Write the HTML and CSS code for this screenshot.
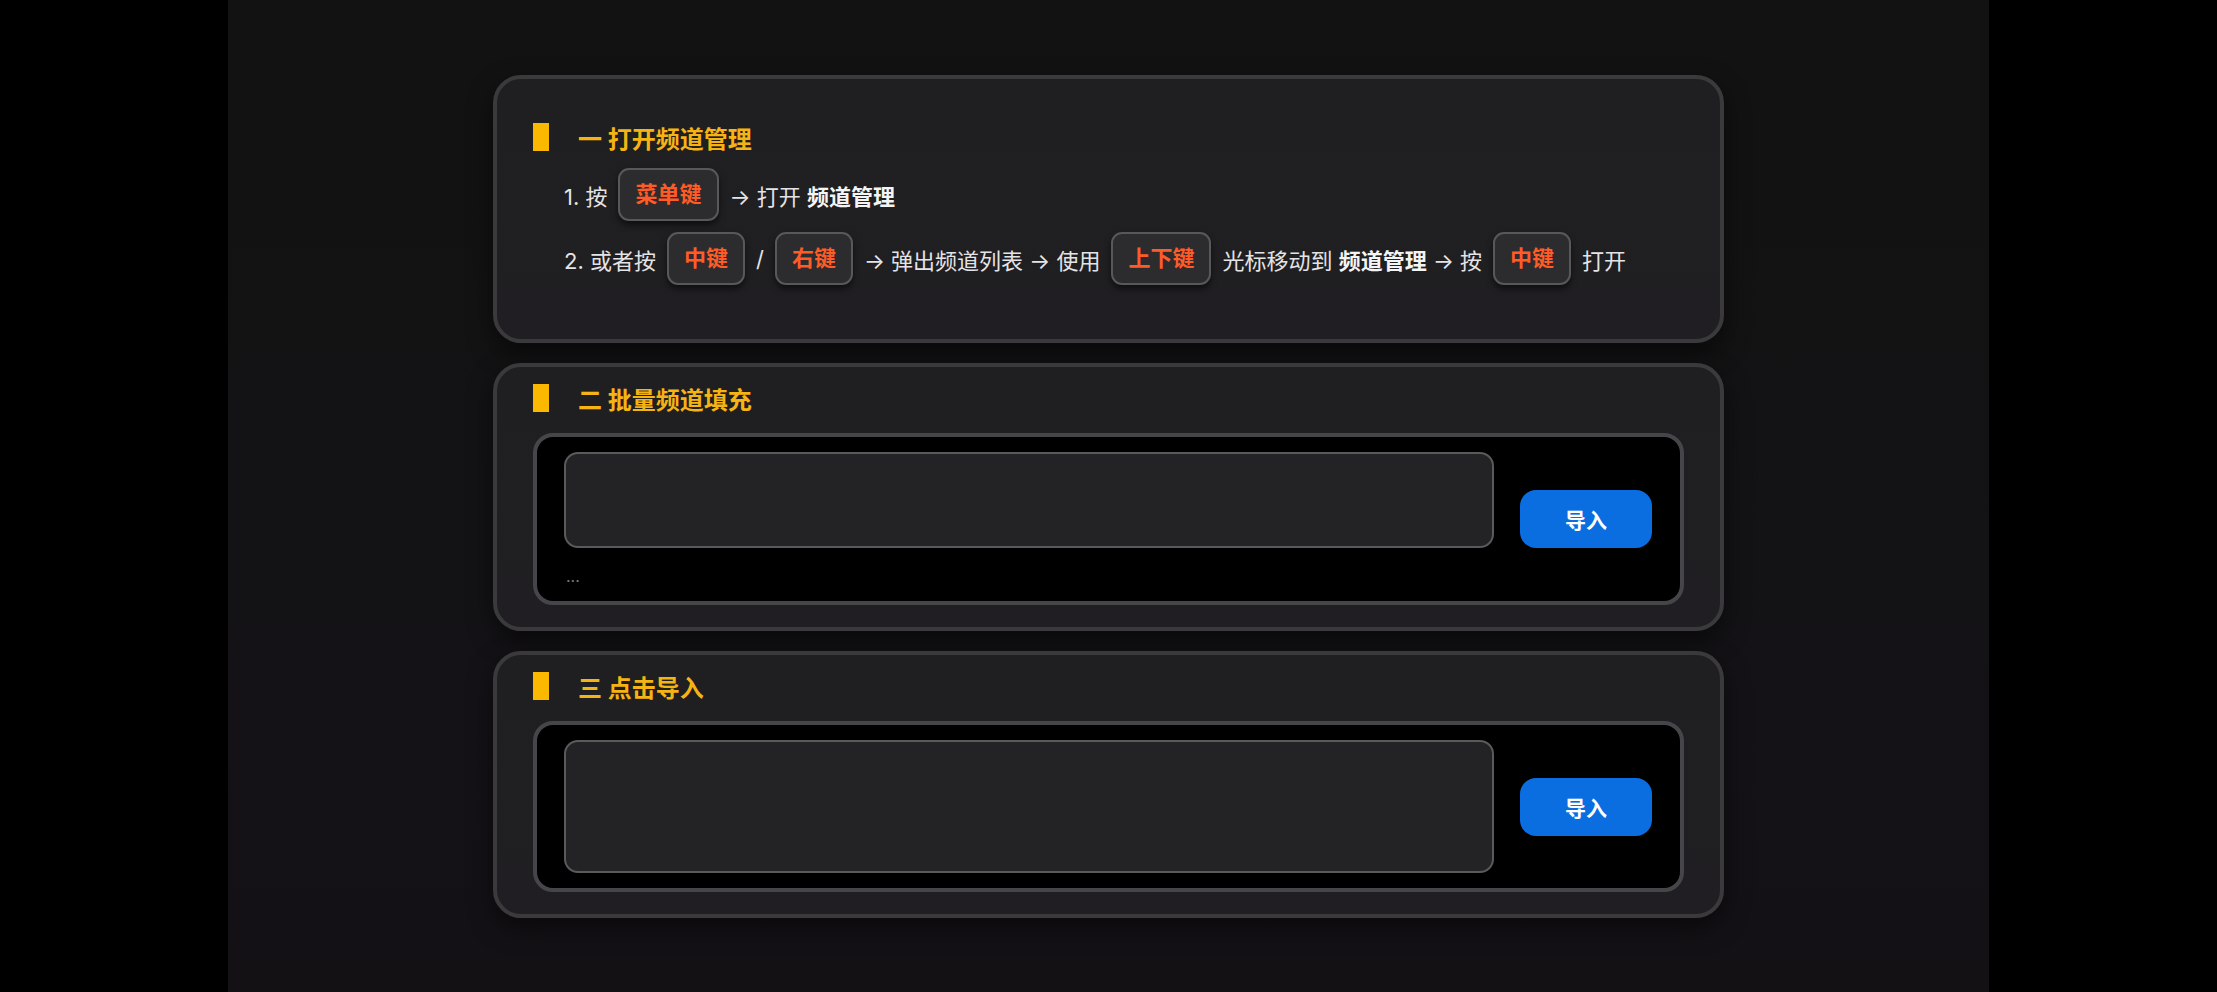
FILE: index.html
```html
<!DOCTYPE html>
<html lang="zh-CN">
<head>
<meta charset="utf-8">
<title>频道管理</title>
<link rel="stylesheet" href="styles.css">
</head>
<body>
<main class="page">
  <section class="card card--guide">
    <h2 class="card-title"><span class="title-bar"></span><span>一 打开频道管理</span></h2>
    <div class="steps">
      <div class="step">
        <span>1. 按</span><span class="key">菜单键</span><span>→ 打开 <b>频道管理</b></span>
      </div>
      <div class="step">
        <span>2. 或者按</span><span class="key">中键</span><span>/</span><span class="key">右键</span><span>→ 弹出频道列表 → 使用</span><span class="key">上下键</span><span>光标移动到 <b>频道管理</b> → 按</span><span class="key">中键</span><span>打开</span>
      </div>
    </div>
  </section>

  <section class="card">
    <h2 class="card-title"><span class="title-bar"></span><span>二 批量频道填充</span></h2>
    <div class="input-box">
      <div class="input-col">
        <textarea class="field field--short"></textarea>
        <div class="hint">...</div>
      </div>
      <button class="btn">导入</button>
    </div>
  </section>

  <section class="card">
    <h2 class="card-title"><span class="title-bar"></span><span>三 点击导入</span></h2>
    <div class="input-box">
      <div class="input-col">
        <textarea class="field field--tall"></textarea>
      </div>
      <button class="btn">导入</button>
    </div>
  </section>
</main>
</body>
</html>
```

FILE: styles.css
```css
html, body {
  margin: 0;
  padding: 0;
  height: 100%;
  background: #000;
}

body {
  font-family: Inter, "Noto Sans CJK SC", sans-serif;
  color: #e4e4e6;
}

.page {
  width: 1761px;
  min-height: 992px;
  margin: 0 auto;
  box-sizing: border-box;
  padding-top: 75px;
  background: linear-gradient(180deg, #121212 0%, #131215 60%, #141115 100%);
  display: flex;
  flex-direction: column;
  align-items: center;
  gap: 20px;
}

.card {
  width: 1231px;
  box-sizing: border-box;
  border: 4px solid #3a3a3c;
  border-radius: 28px;
  background: linear-gradient(180deg, #1f1f21 0%, #201e22 100%);
  padding: 16px 36px 22px 36px;
  box-shadow: 0 10px 24px rgba(0, 0, 0, 0.5);
}

.card--guide {
  padding-top: 43px;
  padding-bottom: 54px;
}

.card-title {
  margin: 0;
  height: 30px;
  display: flex;
  align-items: center;
  font-size: 24px;
  font-weight: 700;
  color: #f5b414;
  letter-spacing: 0;
}

.title-bar {
  width: 16px;
  height: 28px;
  background: #fbb800;
  margin-right: 29px;
  flex: none;
}

.steps {
  margin-top: 16px;
  padding-left: 31px;
  display: flex;
  flex-direction: column;
  gap: 11px;
  font-size: 22px;
}

.step {
  display: flex;
  align-items: center;
  min-height: 53px;
  white-space: nowrap;
}

.step b {
  font-weight: 700;
  color: #f4f4f5;
}

.key {
  display: inline-block;
  box-sizing: border-box;
  height: 53px;
  line-height: 49px;
  padding: 0 15px;
  margin: 0 11px;
  border: 2px solid #58585b;
  border-radius: 11px;
  background: #2c2b2e;
  color: #ff5b26;
  font-weight: 700;
  box-shadow: 0 4px 6px rgba(0, 0, 0, 0.55);
}

.input-box {
  margin-top: 20px;
  border: 4px solid #46464a;
  border-radius: 20px;
  background: #000;
  padding: 15px 28px 15px 27px;
  display: flex;
  align-items: center;
  gap: 26px;
}

.input-col {
  flex: 1;
  display: flex;
  flex-direction: column;
}

.field {
  display: block;
  box-sizing: border-box;
  width: 100%;
  border: 2px solid #5a5a5d;
  border-radius: 14px;
  background: #232225;
  resize: none;
  outline: none;
  color: #e4e4e6;
  font-family: inherit;
  font-size: 20px;
  padding: 10px 14px;
}

.field--short {
  height: 96px;
}

.field--tall {
  height: 133px;
}

.hint {
  margin-top: 18px;
  padding-left: 2px;
  font-size: 16px;
  line-height: 20px;
  color: #7a7a7e;
}

.btn {
  flex: none;
  width: 132px;
  height: 58px;
  border: none;
  border-radius: 16px;
  background: #0a6de0;
  color: #fff;
  font-family: inherit;
  font-size: 21px;
  font-weight: 700;
}
```
